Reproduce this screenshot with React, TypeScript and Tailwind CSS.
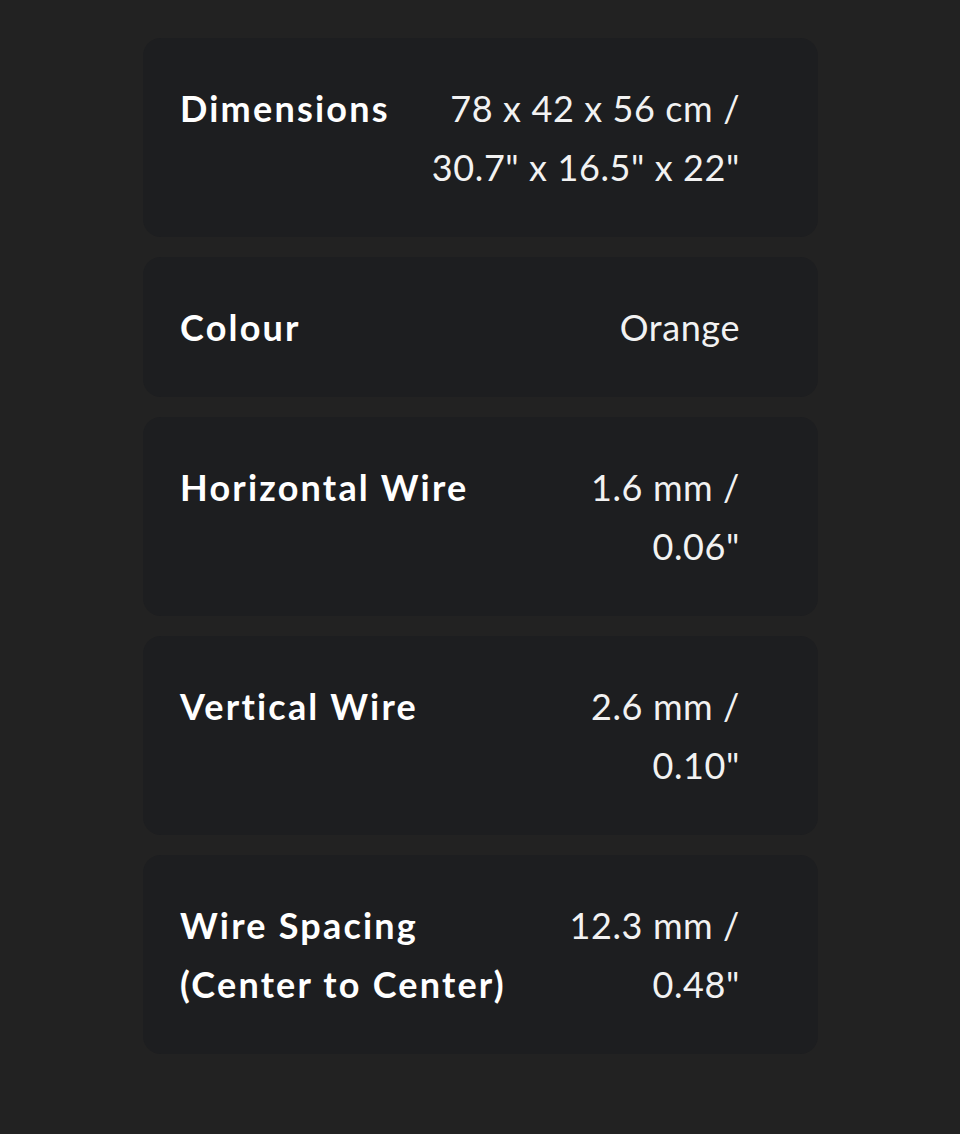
import React from "react";

const rows: { label: React.ReactNode; value: React.ReactNode }[] = [
  {
    label: "Dimensions",
    value: (
      <>
        78 x 42 x 56 cm /
        <br />
        30.7" x 16.5" x 22"
      </>
    ),
  },
  { label: "Colour", value: "Orange" },
  {
    label: "Horizontal Wire",
    value: (
      <>
        1.6 mm /
        <br />
        0.06"
      </>
    ),
  },
  {
    label: "Vertical Wire",
    value: (
      <>
        2.6 mm /
        <br />
        0.10"
      </>
    ),
  },
  {
    label: (
      <>
        Wire Spacing
        <br />
        (Center to Center)
      </>
    ),
    value: (
      <>
        12.3 mm /
        <br />
        0.48"
      </>
    ),
  },
];

export default function App() {
  return (
    <div
      className="min-h-[1134px] w-full bg-[#222222] pt-[38px] pl-[143px] pr-[142px]"
      style={{ fontFamily: "Lato, 'Noto Sans', sans-serif" }}
    >
      <div className="flex flex-col gap-[20px]">
        {rows.map((r, i) => (
          <div
            key={i}
            className="flex justify-between rounded-[18px] bg-[#1d1e20] pl-[37px] pr-[78px] pt-[41px] pb-[40px] text-[36px] leading-[59px]"
          >
            <div className="font-bold tracking-[2.2px] text-white">{r.label}</div>
            <div className="text-right font-normal tracking-[0.6px] text-[#f2f2f2]">{r.value}</div>
          </div>
        ))}
      </div>
    </div>
  );
}
